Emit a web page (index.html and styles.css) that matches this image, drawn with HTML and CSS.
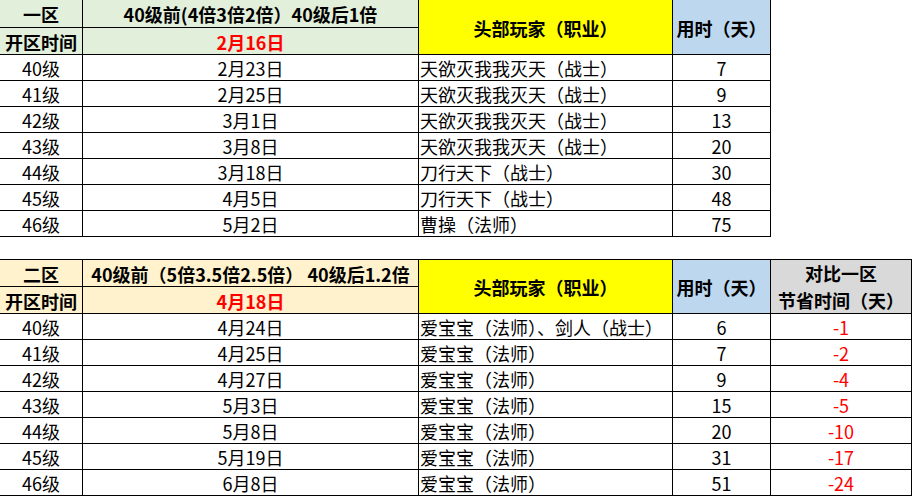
FILE: index.html
```html
<!DOCTYPE html>
<html lang="zh-CN">
<head>
<meta charset="utf-8">
<title>区服对比</title>
<link rel="stylesheet" href="styles.css">
</head>
<body>
<div class="sheet">
  <div class="grid grid-4">
    <div class="c hd green">一区</div>
    <div class="c hd green">40级前(4倍3倍2倍）40级后1倍</div>
    <div class="c hd yellow span2">头部玩家（职业）</div>
    <div class="c hd blue span2">用时（天）</div>
    <div class="c hd green">开区时间</div>
    <div class="c hd green red">2月16日</div>

    <div class="c">40级</div><div class="c">2月23日</div><div class="c left">天欲灭我我灭天（战士）</div><div class="c">7</div>
    <div class="c">41级</div><div class="c">2月25日</div><div class="c left">天欲灭我我灭天（战士）</div><div class="c">9</div>
    <div class="c">42级</div><div class="c">3月1日</div><div class="c left">天欲灭我我灭天（战士）</div><div class="c">13</div>
    <div class="c">43级</div><div class="c">3月8日</div><div class="c left">天欲灭我我灭天（战士）</div><div class="c">20</div>
    <div class="c">44级</div><div class="c">3月18日</div><div class="c left">刀行天下（战士）</div><div class="c">30</div>
    <div class="c">45级</div><div class="c">4月5日</div><div class="c left">刀行天下（战士）</div><div class="c">48</div>
    <div class="c">46级</div><div class="c">5月2日</div><div class="c left">曹操（法师）</div><div class="c">75</div>
  </div>

  <div class="grid grid-5">
    <div class="c hd cream top">二区</div>
    <div class="c hd cream top">40级前（5倍3.5倍2.5倍） 40级后1.2倍</div>
    <div class="c hd yellow span2 top">头部玩家（职业）</div>
    <div class="c hd blue span2 top">用时（天）</div>
    <div class="c hd gray span2 top two">对比一区<br>节省时间（天）</div>
    <div class="c hd cream">开区时间</div>
    <div class="c hd cream red">4月18日</div>

    <div class="c">40级</div><div class="c">4月24日</div><div class="c left">爱宝宝（法师）、剑人（战士）</div><div class="c">6</div><div class="c red">-1</div>
    <div class="c">41级</div><div class="c">4月25日</div><div class="c left">爱宝宝（法师）</div><div class="c">7</div><div class="c red">-2</div>
    <div class="c">42级</div><div class="c">4月27日</div><div class="c left">爱宝宝（法师）</div><div class="c">9</div><div class="c red">-4</div>
    <div class="c">43级</div><div class="c">5月3日</div><div class="c left">爱宝宝（法师）</div><div class="c">15</div><div class="c red">-5</div>
    <div class="c">44级</div><div class="c">5月8日</div><div class="c left">爱宝宝（法师）</div><div class="c">20</div><div class="c red">-10</div>
    <div class="c">45级</div><div class="c">5月19日</div><div class="c left">爱宝宝（法师）</div><div class="c">31</div><div class="c red">-17</div>
    <div class="c">46级</div><div class="c">6月8日</div><div class="c left">爱宝宝（法师）</div><div class="c">51</div><div class="c red">-24</div>
  </div>
</div>
</body>
</html>
```
FILE: styles.css
```css
html, body {
  margin: 0;
  padding: 0;
  background: #ffffff;
}

.sheet {
  display: flex;
  flex-direction: column;
  gap: 22px;
  font-family: "Noto Sans CJK SC", "Noto Sans", sans-serif;
  font-size: 18px;
  color: #000000;
}

.grid {
  display: grid;
  grid-template-rows: 28px 27px repeat(7, 26px);
}

.grid-4 {
  grid-template-columns: 83px 336px 254px 98px;
  width: 771px;
}

.grid-5 {
  grid-template-columns: 83px 336px 254px 98px 141px;
  width: 912px;
}

.c {
  box-sizing: border-box;
  border-right: 1px solid #000;
  border-bottom: 1px solid #000;
  display: flex;
  align-items: center;
  justify-content: center;
  line-height: 1;
  white-space: nowrap;
  overflow: hidden;
  padding-top: 1px;
}

.top {
  border-top: 1px solid #000;
}

.left {
  justify-content: flex-start;
  padding-left: 1px;
}

.hd {
  font-weight: 700;
}

.span2 {
  grid-row: span 2;
}

.two {
  flex-direction: column;
  line-height: 27px;
  text-align: center;
}

.green { background: #e2efda; }
.cream { background: #fff2cc; }
.yellow { background: #ffff00; }
.blue { background: #bdd7ee; }
.gray { background: #d9d9d9; }

.red { color: #ff0000; }
```
